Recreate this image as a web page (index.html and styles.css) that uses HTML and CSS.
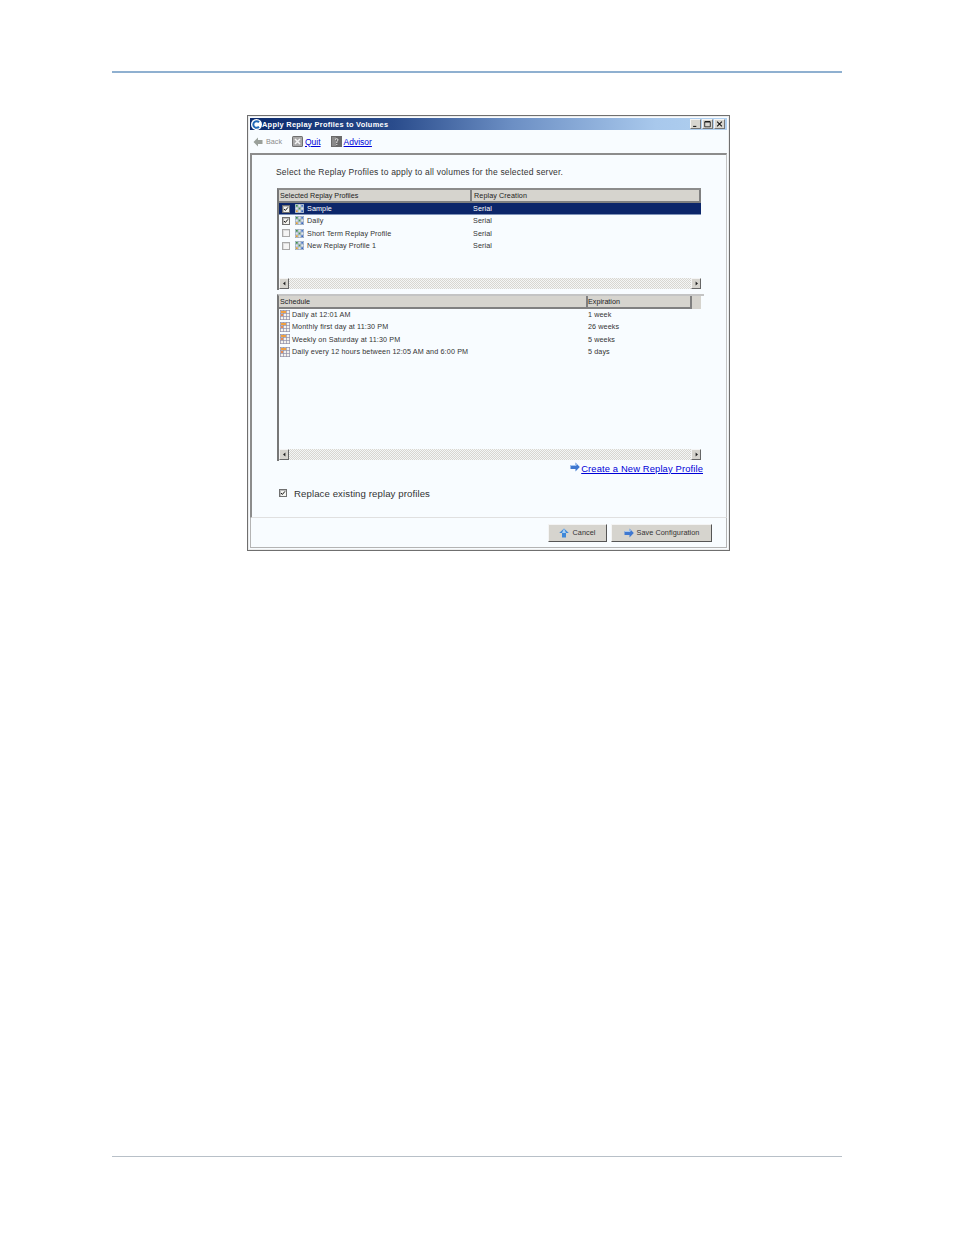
FILE: index.html
```html
<!DOCTYPE html>
<html lang="en">
<head>
<meta charset="utf-8">
<title>Apply Replay Profiles to Volumes</title>
<link rel="stylesheet" href="styles.css">
</head>
<body>
<svg class="defs" width="0" height="0" aria-hidden="true">
  <symbol id="profile" viewBox="0 0 10 10">
    <rect width="10" height="10" fill="#dfe6ee"/>
    <path d="M0 .5h10M0 3.500h10M0 6.500h10M0 9.500h10M.5 0v10M3.500 0v10M6.500 0v10M9.500 0v10" stroke="#8a9ab0" stroke-width=".6"/>
    <rect x="1" y="1" width="2" height="2" fill="#3f8f4a"/>
    <rect x="7" y="1" width="2" height="2" fill="#4a78c8"/>
    <rect x="4" y="4" width="2" height="2" fill="#4a9a50"/>
    <rect x="1" y="7" width="2" height="2" fill="#e0a030"/>
    <rect x="7" y="7" width="2" height="2" fill="#3a68c0"/>
  </symbol>
  <symbol id="cal" viewBox="0 0 10 10">
    <rect width="10" height="10" fill="#f4f2ee"/>
    <path d="M0 .5h10M0 3.500h10M0 6.500h10M0 9.500h10M.5 0v10M3.500 0v10M6.500 0v10M9.500 0v10" stroke="#8f8fa8" stroke-width=".7"/>
    <rect x="1" y="1" width="5" height="2" fill="#f0a040"/>
    <rect x="1" y="4" width="2" height="2" fill="#e88a50"/>
  </symbol>
  <symbol id="arrow" viewBox="0 0 10 10">
    <path d="M.5 3h5V.5L9.800 5 5.500 9.500V7h-5z" fill="#3f78d0"/>
    <path d="M.5 3h5V.5L7 2.500 6 4H.5z" fill="#a8c8f0"/>
  </symbol>
  <symbol id="arrow-up" viewBox="0 0 10 10">
    <path d="M5 .5 9.800 5H7v4.500H3V5H.2z" fill="#3f88d8"/>
    <path d="M5 .5 7 5H3z" fill="#a8d0f4"/>
  </symbol>
  <symbol id="check" viewBox="0 0 9 9">
    <path d="M1.500 4.500 3.500 6.700 7.500 2" fill="none" stroke="#111" stroke-width="1.500"/>
  </symbol>
</svg>

<main class="page">
  <div class="rule-top"></div>

  <section class="window">
    <header class="titlebar">
      <svg class="app-icon" viewBox="0 0 11 11" aria-hidden="true">
        <circle cx="5.500" cy="5.500" r="5.500" fill="#fff"/>
        <path d="M8 3.200A3.300 3.300 0 1 0 8 7.800" fill="none" stroke="#1f68b8" stroke-width="2"/>
      </svg>
      <span class="title-text">Apply Replay Profiles to Volumes</span>
      <div class="win-btns">
        <span class="win-btn"><svg viewBox="0 0 10 10" aria-hidden="true"><path d="M2 8h4" stroke="#111" stroke-width="1.300"/></svg></span>
        <span class="win-btn"><svg viewBox="0 0 10 10" aria-hidden="true"><path d="M1.500 2.500h7v6h-7z" fill="none" stroke="#111"/><path d="M1.500 2h7" stroke="#111" stroke-width="1.300"/></svg></span>
        <span class="win-btn"><svg viewBox="0 0 10 10" aria-hidden="true"><path d="M2 2l6 6M8 2l-6 6" stroke="#111" stroke-width="1.300"/></svg></span>
      </div>
    </header>

    <nav class="toolbar">
      <span class="tool back">
        <svg class="tool-arrow" viewBox="0 0 10 10" aria-hidden="true"><path d="M5 .5.5 5 5 9.500V7h4.500V3H5z" fill="#9aa09a"/></svg>
        Back
      </span>
      <span class="tool">
        <svg class="tool-icon" viewBox="0 0 11 11" aria-hidden="true"><rect width="11" height="11" rx="1.500" fill="#6f6f6f"/><rect x="1" y="1" width="9" height="9" fill="#a8a8a8"/><path d="M3 3l5 5M8 3l-5 5" stroke="#f4f4f4" stroke-width="1.500"/></svg>
        <a href="#">Quit</a>
      </span>
      <span class="tool">
        <svg class="tool-icon" viewBox="0 0 11 11" aria-hidden="true"><rect width="11" height="11" fill="#6a6a6a"/><rect x="1" y="1" width="4" height="9" fill="#8a8a8a"/><path d="M4 3.500Q5.500 2 7 3.300 7.500 4.500 5.800 5.500V7M5.800 8v1" fill="none" stroke="#e8e8e8"/></svg>
        <a href="#">Advisor</a>
      </span>
    </nav>

    <div class="panel">
      <p class="intro">Select the Replay Profiles to apply to all volumes for the selected server.</p>

      <div class="table table-profiles">
        <div class="thead cols-a">
          <div class="th">Selected Replay Profiles</div>
          <div class="th">Replay Creation</div>
        </div>
        <div class="tbody">
          <div class="row cols-a selected">
            <div class="cell name"><span class="cbx"><svg aria-hidden="true"><use href="#check"/></svg></span><svg class="ico" aria-hidden="true"><use href="#profile"/></svg>Sample</div>
            <div class="cell">Serial</div>
          </div>
          <div class="row cols-a">
            <div class="cell name"><span class="cbx"><svg aria-hidden="true"><use href="#check"/></svg></span><svg class="ico" aria-hidden="true"><use href="#profile"/></svg>Daily</div>
            <div class="cell">Serial</div>
          </div>
          <div class="row cols-a">
            <div class="cell name"><span class="cbx off"></span><svg class="ico" aria-hidden="true"><use href="#profile"/></svg>Short Term Replay Profile</div>
            <div class="cell">Serial</div>
          </div>
          <div class="row cols-a">
            <div class="cell name"><span class="cbx off"></span><svg class="ico" aria-hidden="true"><use href="#profile"/></svg>New Replay Profile 1</div>
            <div class="cell">Serial</div>
          </div>
        </div>
        <div class="hscroll">
          <span class="sbtn"><svg viewBox="0 0 5 7" aria-hidden="true"><path d="M4 0v7L0 3.500z" fill="#222"/></svg></span>
          <span class="strack"></span>
          <span class="sbtn"><svg viewBox="0 0 5 7" aria-hidden="true"><path d="M1 0v7l4-3.500z" fill="#222"/></svg></span>
        </div>
      </div>

      <div class="table table-schedule">
        <div class="thead cols-b">
          <div class="th">Schedule</div>
          <div class="th">Expiration</div>
          <div class="th-filler"></div>
        </div>
        <div class="tbody">
          <div class="row cols-b"><div class="cell name"><svg class="ico cal" aria-hidden="true"><use href="#cal"/></svg>Daily at 12:01 AM</div><div class="cell">1 week</div></div>
          <div class="row cols-b"><div class="cell name"><svg class="ico cal" aria-hidden="true"><use href="#cal"/></svg>Monthly first day at 11:30 PM</div><div class="cell">26 weeks</div></div>
          <div class="row cols-b"><div class="cell name"><svg class="ico cal" aria-hidden="true"><use href="#cal"/></svg>Weekly on Saturday at 11:30 PM</div><div class="cell">5 weeks</div></div>
          <div class="row cols-b"><div class="cell name"><svg class="ico cal" aria-hidden="true"><use href="#cal"/></svg>Daily every 12 hours between 12:05 AM and 6:00 PM</div><div class="cell">5 days</div></div>
        </div>
        <div class="hscroll">
          <span class="sbtn"><svg viewBox="0 0 5 7" aria-hidden="true"><path d="M4 0v7L0 3.500z" fill="#222"/></svg></span>
          <span class="strack"></span>
          <span class="sbtn"><svg viewBox="0 0 5 7" aria-hidden="true"><path d="M1 0v7l4-3.500z" fill="#222"/></svg></span>
        </div>
      </div>

      <div class="create">
        <svg class="link-arrow" aria-hidden="true"><use href="#arrow"/></svg>
        <a href="#">Create a New Replay Profile</a>
      </div>

      <label class="replace">
        <span class="cbx small"><svg aria-hidden="true"><use href="#check"/></svg></span>
        Replace existing replay profiles
      </label>
    </div>

    <footer class="footer">
      <button class="btn btn-cancel" type="button"><svg aria-hidden="true"><use href="#arrow-up"/></svg>Cancel</button>
      <button class="btn btn-save" type="button"><svg aria-hidden="true"><use href="#arrow"/></svg>Save Configuration</button>
    </footer>
  </section>

  <div class="rule-bottom"></div>
</main>
</body>
</html>
```
FILE: styles.css
```css
* { box-sizing: border-box; }
html, body { margin: 0; padding: 0; background: #fff; }
body { width: 954px; height: 1235px; overflow: hidden; font-family: "Liberation Sans", Arial, sans-serif; color: #222; }
.defs { position: absolute; }
.page { display: flex; flex-direction: column; height: 1235px; padding: 71px 112px 0; }
.rule-top { height: 2px; background: #8fb0d0; flex: none; }
.rule-bottom { height: 1px; background: #b8c0c8; flex: none; margin-top: 605px; }

.window { flex: none; width: 483px; height: 436px; margin: 42px 0 0 135px; border: 1px solid #6f6f6f; padding: 2px 2px 2px 2px; background: #f8fcff; display: flex; flex-direction: column; box-shadow: inset 0 0 0 1px #ececec; }

.titlebar { flex: none; height: 12px; display: flex; align-items: center; padding: 0 2px 0 1px; background: linear-gradient(90deg, #0b2a6c 0%, #2a4c8c 30%, #6c8fc4 55%, #a8c8ec 85%, #b0d0f0 100%); color: #fff; }
.app-icon { width: 11px; height: 11px; flex: none; }
.title-text { margin-left: 0; font-size: 7.400px; line-height: 11px; font-weight: bold; letter-spacing: .28px; }
.win-btns { margin-left: auto; display: flex; gap: 0; }
.win-btn { width: 11px; height: 10px; display: block; background: #d8d6d0; border: 1px solid; border-color: #f4f4f4 #777 #777 #f4f4f4; margin-left: 1px; }
.win-btn svg { display: block; width: 9px; height: 8px; }

.toolbar { flex: none; height: 23px; display: flex; align-items: center; gap: 10px; padding: 0 0 0 3px; font-size: 7.200px; background: #f8fcff; }
.tool { display: flex; align-items: center; gap: 2px; }
.tool a { color: #0000d8; font-size: 8.500px; }
.back { color: #8c8c8c; gap: 3px; }
.tool-arrow { width: 10px; height: 10px; }
.tool-icon { width: 11px; height: 11px; }

.panel { flex: 1; min-height: 0; border-top: 2px solid #8c8c8c; border-left: 2px solid #8c8c8c; border-right: 1px solid #c4c4c4; border-bottom: 1px solid #e0e0e0; padding: 0 0 0 25px; background: #f8fcff; display: flex; flex-direction: column; }
.intro { margin: 11px 0 0 -1px; height: 12px; line-height: 12px; font-size: 8.500px; letter-spacing: .2px; color: #333; white-space: nowrap; }

.table { width: 424px; flex: none; display: flex; flex-direction: column; border-left: 2px solid #777; }
.table-profiles { height: 102px; margin-top: 10px; border-top: 2px solid #8c8c8c; }
.table-schedule { height: 167px; margin-top: 4px; border-top: 2px solid #c4c4c4; width: 427px; }
.cols-a { display: grid; grid-template-columns: 193px 1fr; }
.cols-b { display: grid; grid-template-columns: 309px 104px 1fr; }
.thead { flex: none; height: 13px; background: #d6d4ce; }
.table-schedule .thead { width: 422px; }
.th { font-size: 7.200px; line-height: 11px; padding-left: 1px; border-right: 2px solid #808080; border-bottom: 2px solid #808080; color: #222; white-space: nowrap; overflow: hidden; }
.cols-a .th + .th { padding-left: 2px; letter-spacing: .1px; }
.cols-b .th + .th { padding-left: 0; }
.th-filler { background: #d6d4ce; }
.tbody { flex: 1; min-height: 0; }
.table-schedule .tbody { width: 422px; }
.row { height: 12.300px; font-size: 7.200px; line-height: 12.300px; letter-spacing: .1px; color: #333; }
.row.selected { background: #0c266a; color: #fff; box-shadow: inset 0 -1px 0 #7f93b8; }
.cell { padding-left: 1px; white-space: nowrap; display: flex; align-items: center; }
.cols-b .cell + .cell { padding-left: 0; }
.name { padding-left: 3px; }
.table-schedule .name { padding-left: 1px; letter-spacing: .13px; }
.cbx { width: 8px; height: 8px; display: block; flex: none; margin-bottom: 1px; background: #f4f4f0; border: 1px solid #707070; box-shadow: inset 1px 1px 0 #bbb; }
.cbx svg { display: block; width: 6px; height: 6px; }
.cbx.off { border-color: #a8a8a8; background: #f4f4f4; box-shadow: inset 1px 1px 0 #ddd; }
.ico { width: 9px; height: 9px; flex: none; margin: 0 3px 1px 5px; }
.ico.cal { width: 10px; height: 10px; margin: 0 2px 1px 0; }
.hscroll { flex: none; height: 12px; display: flex; width: 422px; }
.sbtn { width: 10px; height: 11px; background: #d6d4ce; border: 1px solid; border-color: #f4f4f4 #666 #666 #f4f4f4; display: flex; align-items: center; justify-content: center; flex: none; }
.sbtn svg { width: 3px; height: 5px; }
.strack { flex: 1; height: 11px; background: repeating-conic-gradient(#d8d6d0 0 25%, #f4f6f6 0 50%) 0 0 / 2px 2px; }

.create { display: flex; align-items: center; justify-content: flex-end; width: 426px; height: 12px; margin-top: 1px; font-size: 9.400px; letter-spacing: .13px; }
.create a { color: #0000d8; }
.link-arrow { width: 10px; height: 10px; margin: 0 1px 3px 0; }

.replace { display: flex; align-items: center; gap: 7px; margin: 13px 0 0 2px; height: 12px; font-size: 9.600px; letter-spacing: .1px; color: #333; }
.cbx.small { width: 8px; height: 8px; }

.footer { flex: none; height: 30px; display: flex; justify-content: flex-end; align-items: flex-start; gap: 4px; padding: 6px 14px 0 0; background: #f8fcff; border: 1px solid #b4b4b4; border-top: 0; }
.btn { height: 18px; display: flex; align-items: center; justify-content: center; gap: 3px; padding: 0 0 1px; font: 7.300px "Liberation Sans", Arial, sans-serif; letter-spacing: .05px; color: #333; background: #d6d4ce; border: 1px solid; border-color: #f4f4f4 #555 #555 #f4f4f4; }
.btn svg { width: 10px; height: 10px; }
.btn-cancel { width: 59px; }
.btn-save { width: 101px; }
```
